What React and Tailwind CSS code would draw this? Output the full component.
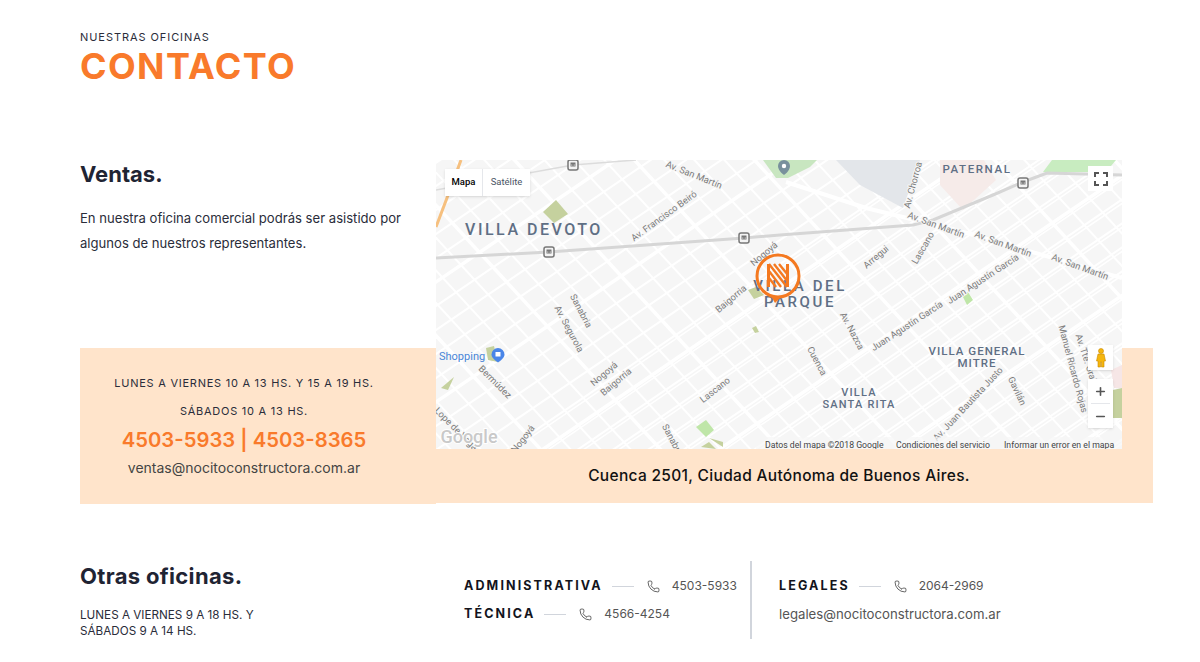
import React from 'react'
import { Phone, Plus, Minus } from 'lucide-react'

const font = { fontFamily: 'Inter, "Noto Sans", sans-serif' }

// street grid of the map, two diagonal families
const streetsA = Array.from({ length: 46 }, (_, i) => {
  const c = -120 + i * 24
  return { x1: -100, y1: c + 70, x2: 800, y2: c + 70 - 900 * 0.68, w: i % 5 === 0 ? 3.5 : 2 }
}).concat(Array.from({ length: 46 }, (_, i) => {
  const c = -110 + i * 24
  return { x1: -100, y1: c + 520, x2: 800, y2: c + 520 - 900 * 0.68, w: 1.5 }
}))

const streetsB = Array.from({ length: 40 }, (_, i) => {
  const c = -420 + i * 30
  return { x1: c, y1: -20, x2: c + 350 * 0.92, y2: 330, w: i % 4 === 0 ? 3.5 : 2 }
})

const districts = [
  { t: 'VILLA DEVOTO', x: 98, y: 75, s: 16, sp: 2.5 },
  { t: 'PATERNAL', x: 541, y: 13, s: 11.5, sp: 1.6 },
  { t: 'VILLA DEL', x: 364, y: 131, s: 15, sp: 2.6 },
  { t: 'PARQUE', x: 364, y: 147, s: 15, sp: 2.6 },
  { t: 'VILLA GENERAL', x: 541, y: 195, s: 11.5, sp: 1 },
  { t: 'MITRE', x: 541, y: 207, s: 11.5, sp: 1 },
  { t: 'VILLA', x: 423, y: 236, s: 11, sp: 1.2 },
  { t: 'SANTA RITA', x: 423, y: 248, s: 11, sp: 1.2 },
]

const labels = [
  ['Av. San Martín', 258, 18, 22],
  ['Av. Francisco Beiró', 228, 59, -36],
  ['Sanabria', 145, 154, 62],
  ['Av. Segurola', 133, 172, 62],
  ['Baigorria', 295, 142, -40],
  ['Nogoyá', 328, 97, -40],
  ['Av. Chorroa', 477, 28, -75],
  ['Av. San Martín', 500, 68, 20],
  ['Av. San Martín', 567, 87, 20],
  ['Av. San Martín', 644, 110, 20],
  ['Arregui', 440, 100, -40],
  ['Lascano', 487, 91, -60],
  ['Juan Agustín García', 547, 122, -33],
  ['Juan Agustín García', 471, 169, -33],
  ['Av. Nazca', 416, 174, 62],
  ['Cuenca', 381, 204, 62],
  ['Manuel Ricardo Rojas', 637, 212, 75],
  ['Av. Tte. Gral. D.', 652, 207, 72],
  ['Av. Juan Bautista Justo', 532, 247, -47],
  ['Gavilán', 581, 234, 65],
  ['Bermúdez', 59, 225, 45],
  ['Nogoyá', 168, 217, -40],
  ['Baigorria', 180, 225, -40],
  ['Lascano', 279, 233, -38],
  ['Lope de Vega', 20, 272, 45],
  ['Nogoyá', 87, 282, -52],
  ['Sanabria', 237, 284, 62],
]

const patches = [
  ['107,52 120,40 132,54 118,63', '#c5d19e'],
  ['312,130 320,127 328,135 318,139', '#c5d19e'],
  ['327,0 381,0 374,7 352,18 340,18', '#c8e6c0'],
  ['400,0 484,0 467,48 424,25', '#e3e6ea'],
  ['504,0 548,0 560,20 527,50 504,25', '#f6ebe9'],
  ['607,12 616,0 680,0 670,12', '#c8ecc0'],
  ['526,135 532,132 537,140 531,145', '#bfe6a8'],
  ['260,267 270,260 278,270 270,277', '#bfe6a8'],
  ['265,287 273,282 280,289', '#c5d19e'],
  ['273,278 287,282 287,287', '#c5d19e'],
  ['677,230 686,228 686,258 677,258', '#c5d19e'],
  ['675,210 686,205 686,228 678,228', '#f6e6e6'],
  ['5,228 18,217 12,230', '#c5d19e'],
  ['316,168 320,166 323,172 319,173', '#c5d19e'],
  ['50,188 58,186 62,202 52,200', '#c5d19e'],
]

const stations = [[137, 5], [113, 92], [308, 78], [587, 23]]

function MapDrawing() {
  return (
    <svg viewBox="0 0 686 289" className="w-full h-full block" style={{ fontFamily: 'Roboto, sans-serif' }}>
      <rect width="686" height="289" fill="#f6f6f6" />
      {streetsA.concat(streetsB).map((s, i) => (
        <line key={i} x1={s.x1} y1={s.y1} x2={s.x2} y2={s.y2} stroke="#ffffff" strokeWidth={s.w} />
      ))}
      {patches.map(([points, fill], i) => <polygon key={i} points={points} fill={fill} />)}
      <path d="M25 0 L14 30 L0 67" fill="none" stroke="#f6c07f" strokeWidth="3" />
      <path d="M350 22 L430 48 L520 70 L686 118" fill="none" stroke="#ffffff" strokeWidth="4" />
      <path d="M0 98 L113 92 L308 78 L344 75 L477 65 L497 60 L557 35 L587 22 L611 13 L686 15" fill="none" stroke="#d6d6d6" strokeWidth="3" />
      <path d="M0 30 L137 5 L200 0" fill="none" stroke="#dcdcdc" strokeWidth="1.5" />
      {stations.map(([x, y], i) => (
        <g key={i}>
          <rect x={x - 5} y={y - 5} width="10" height="10" rx="2" fill="#f4f4f4" stroke="#777" strokeWidth="1.5" />
          <rect x={x - 2.5} y={y - 2.5} width="5" height="4" fill="#777" />
          <circle cx={x - 1.2} cy={y} r=".6" fill="#fff" />
          <circle cx={x + 1.2} cy={y} r=".6" fill="#fff" />
        </g>
      ))}
      {labels.map(([t, x, y, r], i) => (
        <text key={i} x={x} y={y} textAnchor="middle" fontSize="9.3" fill="#7c7c7c" stroke="#f6f6f6" strokeWidth="2" paintOrder="stroke" transform={`rotate(${r} ${x} ${y - 3})`}>{t}</text>
      ))}
      {districts.map((d, i) => (
        <text key={i} x={d.x} y={d.y} textAnchor="middle" fontSize={d.s} fontWeight="500" letterSpacing={d.sp} fill="#5f6f85">{d.t}</text>
      ))}
      {/* pins */}
      <path d="M348 0 a6 6 0 0 1 6 6 c0 5 -6 9 -6 9 s-6 -4 -6 -9 a6 6 0 0 1 6 -6z" fill="#78909c" />
      <circle cx="348" cy="6" r="2.2" fill="#fff" />
      <text x="3" y="200" fontSize="11" fill="#4a86d8">Shopping</text>
      <path d="M62 188 a6.5 6.5 0 0 1 6.5 6.5 c0 4 -6.5 8 -6.5 8 s-6.5 -4 -6.5 -8 a6.5 6.5 0 0 1 6.5 -6.5z" fill="#4a86e8" />
      <rect x="59.5" y="192" width="5" height="4.5" fill="#fff" />
      {/* logo pin */}
      <path d="M335 136 L345 137 L339 143z" fill="#f47920" />
      <circle cx="342" cy="116" r="21" fill="none" stroke="#f47920" strokeWidth="3" />
      <g fill="none" stroke="#f47920">
        <path d="M332.5 104 V127" strokeWidth="3" />
        <path d="M351.5 104 V127" strokeWidth="3" />
        <path d="M333 104 L351 127 M338 104 L352 122 M343 104 L352 115 M333 111 L345 127 M333 118 L340 127" strokeWidth="2.4" />
      </g>
      <text x="33" y="283" textAnchor="middle" fontSize="18" fontWeight="500" fill="#c9c9c9" stroke="#fff" strokeWidth="2" paintOrder="stroke">Google</text>
      <rect x="320" y="277" width="366" height="12" fill="#f6f6f6" fillOpacity=".7" />
      <g fontSize="8.7" fill="#444">
        <text x="329" y="288">Datos del mapa ©2018 Google</text>
        <text x="460" y="288">Condiciones del servicio</text>
        <text x="568" y="288">Informar un error en el mapa</text>
      </g>
    </svg>
  )
}

function MapControls() {
  return (
    <>
      <div className="absolute left-[9px] top-[9px] flex h-[27px] bg-white shadow text-[9.5px]" style={{ fontFamily: 'Roboto, sans-serif' }}>
        <div className="w-[38px] flex items-center justify-center font-medium text-black border-r border-gray-200">Mapa</div>
        <div className="w-[47px] flex items-center justify-center text-gray-600">Satélite</div>
      </div>
      <div className="absolute right-[9px] top-[6px] w-[25px] h-[25px] bg-white flex items-center justify-center">
        <svg width="14" height="14" viewBox="0 0 14 14" fill="none" stroke="#555" strokeWidth="2">
          <path d="M1 5V1h4M9 1h4v4M13 9v4H9M5 13H1V9" />
        </svg>
      </div>
      <div className="absolute right-[9px] top-[185px] w-[25px] h-[25px] bg-white shadow-sm flex items-center justify-center">
        <svg width="10" height="20" viewBox="0 0 10 20" fill="#f5b60e" stroke="#c98a00" strokeWidth=".6">
          <circle cx="5" cy="3" r="2.5" />
          <path d="M2 6h6l1.5 7H8v6H5.5v-5h-1v5H2v-6H.5z" />
        </svg>
      </div>
      <div className="absolute right-[9px] top-[219px] w-[25px] h-[49px] bg-white shadow-sm flex flex-col items-center text-[#555]">
        <div className="h-[24px] flex items-center"><Plus size={13} strokeWidth={3} /></div>
        <div className="w-[19px] border-t border-gray-200" />
        <div className="h-[24px] flex items-center"><Minus size={13} strokeWidth={3} /></div>
      </div>
    </>
  )
}

function PhoneLine({ label, number }) {
  return (
    <div className="flex items-center h-[28px]">
      <span className="text-[12.5px] font-bold tracking-[0.17em] text-[#12141c]">{label}</span>
      <span className="w-[22px] h-px bg-gray-300 ml-[9px]" />
      <Phone size={13} strokeWidth={1.4} className="text-[#333] ml-[13px]" />
      <span className="text-[12px] text-[#555] ml-[12px]">{number}</span>
    </div>
  )
}

export default function App() {
  return (
    <div className="w-[1200px] h-[662px] overflow-hidden bg-white" style={font}>
      <header className="pl-20 pt-[30px] h-[160px]">
        <p className="text-[11px] leading-[14px] tracking-[0.085em] text-[#2a2d3a]">NUESTRAS OFICINAS</p>
        <h1 className="mt-px text-[36px] leading-[42px] font-bold text-[#f97a2b] tracking-[0.038em]">CONTACTO</h1>
      </header>

      <section className="flex pl-20 h-[344px]">
        <div className="w-[356px] flex flex-col justify-between">
          <div>
            <h2 className="text-[22px] leading-[28px] font-bold text-[#1f2433]">Ventas.</h2>
            <p className="mt-[18px] text-[13.1px] leading-[25px] text-[#2a2d3a] pr-[20px]">
              En nuestra oficina comercial podrás ser asistido por algunos de nuestros representantes.
            </p>
          </div>
          <div className="h-[156px] bg-[#ffe4cb] pr-[28px] pt-[21px] text-center">
            <p className="text-[11px] leading-[28px] tracking-[0.068em] text-[#2a2d3a]">LUNES A VIERNES 10 A 13 HS. Y 15 A 19 HS.</p>
            <p className="text-[11px] leading-[28px] tracking-[0.068em] text-[#2a2d3a]">SÁBADOS 10 A 13 HS.</p>
            <p className="text-[20.3px] leading-[30px] font-semibold text-[#f97a2b]">4503-5933 | 4503-8365</p>
            <p className="text-[14px] leading-[26px] text-[#444]">ventas@nocitoconstructora.com.ar</p>
          </div>
        </div>

        <div className="relative w-[717px]">
          <div className="absolute inset-x-0 top-[188px] bottom-[1px] bg-[#ffe4cb]" />
          <div className="relative w-[686px] h-[289px] overflow-hidden">
            <MapDrawing />
            <MapControls />
          </div>
          <p className="relative w-[686px] h-[54px] flex items-center justify-center text-[15.5px] font-medium tracking-[0.02em] text-[#111]">
            Cuenca 2501, Ciudad Autónoma de Buenos Aires.
          </p>
        </div>
      </section>

      <section className="flex pl-20 pt-[57px]">
        <div className="w-[384px]">
          <h2 className="text-[22px] leading-[30px] font-bold tracking-[0.015em] text-[#1f2433]">Otras oficinas.</h2>
          <p className="mt-[16px] text-[11.7px] leading-[16px] text-[#2a2d3a]">
            LUNES A VIERNES 9 A 18 HS. Y<br />SÁBADOS 9 A 14 HS.
          </p>
        </div>
        <div className="w-[288px] h-[78px] border-r-2 border-gray-300 pt-[11px]">
          <PhoneLine label="ADMINISTRATIVA" number="4503-5933" />
          <PhoneLine label="TÉCNICA" number="4566-4254" />
        </div>
        <div className="pl-[27px] pt-[11px]">
          <PhoneLine label="LEGALES" number="2064-2969" />
          <p className="text-[13.2px] leading-[28px] text-[#555]">legales@nocitoconstructora.com.ar</p>
        </div>
      </section>
    </div>
  )
}
